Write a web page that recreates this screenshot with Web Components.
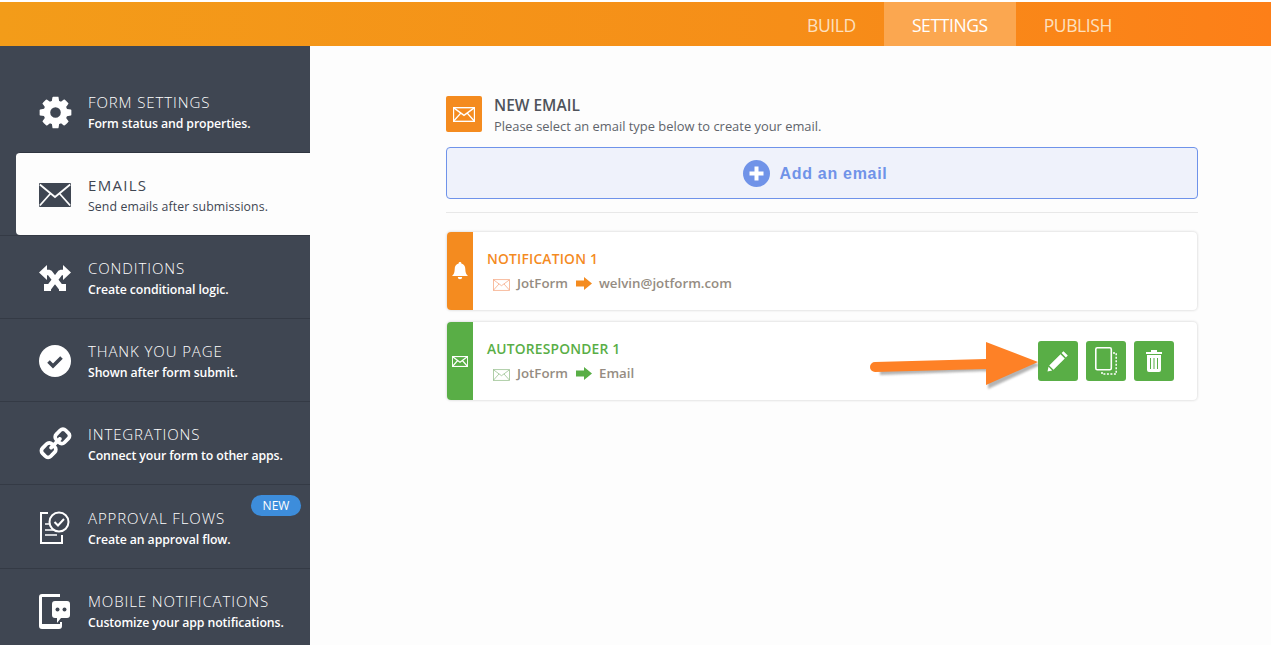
<!DOCTYPE html>
<html>
<head>
<meta charset="utf-8">
<title>Emails</title>
<style>
  html, body { margin: 0; height: 100%; overflow: hidden; background: #fdfdfd; }
  body { font-family: "Open Sans", "Noto Sans", sans-serif; }
</style>
</head>
<body>
<form-builder>
  <top-bar slot="top">
    <top-tab>BUILD</top-tab>
    <top-tab active>SETTINGS</top-tab>
    <top-tab>PUBLISH</top-tab>
  </top-bar>

  <side-nav slot="side">
    <nav-item heading="FORM SETTINGS" text="Form status and properties." plain>
      <svg viewBox="0 0 1792 1792" width="37" height="37" fill="currentColor"><path d="M1152 896q0-106-75-181t-181-75-181 75-75 181 75 181 181 75 181-75 75-181zm512-109v222q0 12-8 23t-20 13l-185 28q-19 54-39 91 35 50 107 138 10 12 10 25t-9 23q-27 37-99 108t-94 71q-12 0-26-9l-138-108q-44 23-91 38-16 136-29 186-7 28-36 28h-222q-14 0-24.500-8.500t-11.500-21.500l-28-184q-49-16-90-37l-141 107q-10 9-25 9-14 0-25-11-126-114-165-168-7-10-7-23 0-12 8-23 15-21 51-66.500t54-70.500q-27-50-41-99l-183-27q-13-2-21-12.500t-8-23.500v-222q0-12 8-23t19-13l186-28q14-46 39-92-40-57-107-138-10-12-10-24 0-10 9-23 26-36 98.500-107.500t94.500-71.500q13 0 26 10l138 107q44-23 91-38 16-136 29-186 7-28 36-28h222q14 0 24.500 8.500t11.500 21.500l28 184q49 16 90 37l142-107q9-9 24-9 13 0 25 10 129 119 165 170 7 8 7 22 0 12-8 23-15 21-51 66.500t-54 70.500q26 50 41 98l183 28q13 2 21 12.500t8 23.500z"/></svg>
    </nav-item>
    <nav-item heading="EMAILS" text="Send emails after submissions." active>
      <svg viewBox="0 0 32 24" width="32" height="24"><rect x="0" y="0" width="32" height="24" rx="1" fill="currentColor"/><path d="M0.800 1.500 16 14 31.200 1.500M0.800 22.500 11.500 10.500M31.200 22.500 20.500 10.500" fill="none" stroke="#fdfdfd" stroke-width="1.800"/></svg>
    </nav-item>
    <nav-item heading="CONDITIONS" text="Create conditional logic.">
      <svg viewBox="0 0 32 26" width="32" height="26" fill="currentColor"><path d="M0 7.500 8 0V15ZM32 7.500 24 0V15Z"/><path d="M7 7.500H10.500L23.500 24.500M25 7.500H21.500L8.500 24.500" fill="none" stroke="currentColor" stroke-width="5.500" stroke-linejoin="bevel"/><path d="M5 19H12V26H5ZM20 19H27V26H20Z"/></svg>
    </nav-item>
    <nav-item heading="THANK YOU PAGE" text="Shown after form submit.">
      <svg viewBox="0 0 32 32" width="32" height="32"><circle cx="16" cy="16" r="16" fill="currentColor"/><path d="M9.500 16.500 14 21 22.500 12.500" fill="none" stroke="#3f4652" stroke-width="3.600"/></svg>
    </nav-item>
    <nav-item heading="INTEGRATIONS" text="Connect your form to other apps.">
      <svg viewBox="0 0 1792 1792" width="35" height="35" fill="currentColor"><path transform="matrix(-1 0 0 1 1792 0)" d="M1520 1216q0-40-28-68l-208-208q-28-28-68-28-42 0-72 32 3 3 19 18.500t21.500 21.500 15 19 13 25.500 3.500 27.500q0 40-28 68t-68 28q-15 0-27.500-3.500t-25.500-13-19-15-21.500-21.500-18.500-19q-33 31-33 73 0 40 28 68l206 207q27 27 68 27 40 0 68-26l147-146q28-28 28-67zm-703-705q0-40-28-68l-206-207q-28-28-68-28-39 0-68 27l-147 146q-28 28-28 67 0 40 28 68l208 208q27 27 68 27 42 0 72-31-3-3-19-18.500t-21.500-21.500-15-19-13-25.500-3.500-27.500q0-40 28-68t68-28q15 0 27.500 3.500t25.500 13 19 15 21.500 21.500 18.500 19q33-31 33-73zm895 705q0 120-85 203l-147 146q-83 83-203 83-121 0-204-85l-206-207q-83-83-83-203 0-123 88-209l-88-88q-86 88-208 88-120 0-204-84l-208-208q-84-84-84-204t85-203l147-146q83-83 203-83 121 0 204 85l206 207q83 83 83 203 0 123-88 209l88 88q86-88 208-88 120 0 204 84l208 208q84 84 84 204z"/></svg>
    </nav-item>
    <nav-item heading="APPROVAL FLOWS" text="Create an approval flow." badge="NEW">
      <svg viewBox="0 0 32 34" width="32" height="34" fill="none" stroke="currentColor" stroke-width="2"><path d="M9 2H2V32H23V24"/><path d="M6 13H11M6 19H15M6 24H18" stroke-width="1.600"/><circle cx="20" cy="11" r="9.500"/><path d="M15.500 11 19 14.500 25 8"/></svg>
    </nav-item>
    <nav-item heading="MOBILE NOTIFICATIONS" text="Customize your app notifications.">
      <svg viewBox="0 0 32 35" width="32" height="35" fill="currentColor"><path d="M3 0H21V3H3V30H21V28H23V32A3 3 0 0 1 20 35H3A3 3 0 0 1 0 32V3A3 3 0 0 1 3 0Z"/><path d="M16 7H28A3 3 0 0 1 31 10V21A3 3 0 0 1 28 24H22L18 29V24H16A3 3 0 0 1 13 21V10A3 3 0 0 1 16 7Z"/><circle cx="18.500" cy="15.500" r="2" fill="#3f4652"/><circle cx="25.500" cy="15.500" r="2" fill="#3f4652"/></svg>
    </nav-item>
  </side-nav>

  <email-panel slot="main">
    <email-card slot="cards" kind="notification" heading="NOTIFICATION 1" target="welvin@jotform.com"></email-card>
    <email-card slot="cards" kind="autoresponder" heading="AUTORESPONDER 1" target="Email" actions></email-card>
    <callout-arrow slot="overlay"></callout-arrow>
  </email-panel>
</form-builder>

<script>
const ENVELOPE = `<rect x="0.500" y="0.500" width="23" height="15" fill="none" stroke="currentColor"/><path d="M0.500 0.500 12 9 23.500 0.500M0.500 15.500 8.500 6.500M23.500 15.500 15.500 6.500" fill="none" stroke="currentColor"/>`;

class FormBuilder extends HTMLElement {
  constructor() {
    super();
    this.attachShadow({ mode: "open" }).innerHTML = `
      <style>
        :host { display: grid; grid-template: 44px 1fr / 310px 1fr; height: 643px; padding-top: 2px; background: #fff; }
        .top { grid-column: 1 / 3; }
        .body { background: #fdfdfd; min-width: 0; position: relative; }
      </style>
      <div class="top"><slot name="top"></slot></div>
      <slot name="side"></slot>
      <div class="body"><slot name="main"></slot></div>
    `;
  }
}

class TopBar extends HTMLElement {
  constructor() {
    super();
    this.attachShadow({ mode: "open" }).innerHTML = `
      <style>
        :host { display: flex; justify-content: flex-end; height: 44px; padding-right: 131px; background: linear-gradient(90deg, #f39c19 0%, #f68e18 62%, #fd7f18 100%); }
      </style>
      <slot></slot>
    `;
  }
}

class TopTab extends HTMLElement {
  constructor() {
    super();
    this.attachShadow({ mode: "open" }).innerHTML = `
      <style>
        :host { display: flex; align-items: center; padding: 1px 28px 0; font: 400 17.500px "Open Sans", sans-serif; letter-spacing: -0.400px; color: #fde0c0; }
        :host([active]) { background: #fba750; color: #fff; }
      </style>
      <slot></slot>
    `;
  }
}

class SideNav extends HTMLElement {
  constructor() {
    super();
    this.attachShadow({ mode: "open" }).innerHTML = `
      <style>
        :host { display: block; background: #3f4652; padding-top: 23px; overflow: hidden; }
      </style>
      <slot></slot>
    `;
  }
}

class NavItem extends HTMLElement {
  constructor() {
    super();
    this.attachShadow({ mode: "open" }).innerHTML = `
      <style>
        :host { display: flex; position: relative; align-items: center; height: 82px; padding-left: 39px; border-top: 1px solid #343a45; color: #fff; }
        :host([plain]) { border-top-color: transparent; }
        :host([badge]) { height: 83px; }
        :host([active]) { margin-left: 16px; padding-left: 23px; background: #fdfdfd; color: #3f4652; border-top: 1px solid #2f3540; border-radius: 4px 0 0 4px; }
        .icon { width: 32px; height: 36px; display: flex; align-items: center; justify-content: center; flex: none; margin-top: 2px; }
        ::slotted(svg) { flex: none; }
        .label { margin-left: 17px; margin-top: 4px; }
        .heading { font: 300 15px/19px "Open Sans", sans-serif; letter-spacing: 0.900px; white-space: nowrap; }
        :host([active]) .heading { font-weight: 400; letter-spacing: 1.300px; }
        .text { font: 600 12.300px/18px "Open Sans", sans-serif; white-space: nowrap; letter-spacing: -0.100px; margin-top: 3px; }
        :host([active]) .text { font-weight: 400; letter-spacing: 0.100px; }
        .badge { position: absolute; top: 10px; right: 9px; height: 21px; width: 50px; border-radius: 11px; background: #3d8ddb; color: #fff; font: 400 12px/21px "Open Sans", sans-serif; text-align: center; }
      </style>
      <div class="icon"><slot></slot></div>
      <div class="label">
        <div class="heading"></div>
        <div class="text"></div>
      </div>
    `;
  }
  connectedCallback() {
    const root = this.shadowRoot;
    root.querySelector(".heading").textContent = this.getAttribute("heading");
    root.querySelector(".text").textContent = this.getAttribute("text");
    if (this.hasAttribute("badge")) {
      const badge = document.createElement("div");
      badge.className = "badge";
      badge.textContent = this.getAttribute("badge");
      root.append(badge);
    }
  }
}

class EmailPanel extends HTMLElement {
  constructor() {
    super();
    this.attachShadow({ mode: "open" }).innerHTML = `
      <style>
        :host { display: block; width: 752px; margin-left: 136px; padding-top: 50px; color: #55585f; }
        .head { display: flex; height: 36px; }
        .badge { width: 36px; height: 36px; border-radius: 2px; background: #f48b1f; display: flex; align-items: center; justify-content: center; color: #fff; stroke-width: 1.600; }
        .copy { margin-left: 12px; }
        .title { font: 600 15.500px/19px "Open Sans", sans-serif; margin-top: 0; color: #4f535b; }
        .sub { font: 400 12.900px/18px "Open Sans", sans-serif; color: #60646b; margin-top: 2px; }
        .add { display: flex; align-items: center; justify-content: center; height: 49px; margin-top: 15px; padding: 1px 14px 0 0; border: 1px solid #6f93ea; border-radius: 4px; background: #eff2fb; color: #7093e8; font: 700 16px "Liberation Sans", sans-serif; letter-spacing: 0.700px; }
        .add svg { margin-right: 10px; margin-top: -1px; }
        .rule { height: 1px; background: #e8e8e8; margin-top: 13px; margin-bottom: 19px; }
        .cards { display: flex; flex-direction: column; gap: 12px; padding: 0 1px; }
      </style>
      <div class="head">
        <div class="badge"><svg viewBox="0 0 24 16" width="22" height="15">${ENVELOPE}</svg></div>
        <div class="copy">
          <div class="title">NEW EMAIL</div>
          <div class="sub">Please select an email type below to create your email.</div>
        </div>
      </div>
      <div class="add">
        <svg viewBox="0 0 27 27" width="27" height="27"><circle cx="13.500" cy="13.500" r="13.500" fill="currentColor"/><path d="M13.500 6.500V20.500M6.500 13.500H20.500" stroke="#fff" stroke-width="4"/></svg>
        Add an email
      </div>
      <div class="rule"></div>
      <div class="cards"><slot name="cards"></slot></div>
      <slot name="overlay"></slot>
    `;
  }
}

class EmailCard extends HTMLElement {
  constructor() {
    super();
    this.attachShadow({ mode: "open" }).innerHTML = `
      <style>
        :host { display: flex; height: 78px; background: #fff; border-radius: 4px; box-shadow: 0 0 3px rgba(0, 0, 0, 0.2); overflow: hidden; --accent: #f48b1f; --mail: #f5a27a; }
        :host([kind="autoresponder"]) { --accent: #59ae46; --mail: #8fbb85; }
        .strip { width: 26px; flex: none; background: var(--accent); color: #fff; display: flex; align-items: center; justify-content: center; stroke-width: 1.800; }
        .info { margin-left: 14px; padding-top: 17px; flex: 1; }
        .name { font: 600 13.800px/20px "Open Sans", sans-serif; color: var(--accent); letter-spacing: 0.200px; }
        .route { display: flex; align-items: center; margin-top: 4px; height: 20px; padding-left: 6px; font: 600 13.300px/20px "Open Sans", sans-serif; color: #958c82; }
        .mail { color: var(--mail); margin-right: 7px; margin-top: 3px; }
        .arrow { margin: 0 7px 0 8px; }
        .actions { display: flex; gap: 8px; align-items: center; padding-right: 23px; }
        .act { width: 40px; height: 40px; border-radius: 3px; background: #59ae46; display: flex; align-items: center; justify-content: center; color: #fff; }
      </style>
      <div class="strip"></div>
      <div class="info">
        <div class="name"></div>
        <div class="route">
          <svg class="mail" viewBox="0 0 24 16" width="17" height="12">${ENVELOPE}</svg>
          <span>JotForm</span>
          <svg class="arrow" viewBox="0 0 16 13" width="16" height="13"><path d="M0 3.500H8V0L16 6.500 8 13V9.500H0Z" fill="var(--accent)"/></svg>
          <span class="target"></span>
        </div>
      </div>
    `;
  }
  connectedCallback() {
    const root = this.shadowRoot;
    root.querySelector(".name").textContent = this.getAttribute("heading");
    root.querySelector(".target").textContent = this.getAttribute("target");
    root.querySelector(".strip").innerHTML = this.getAttribute("kind") === "notification"
      ? `<svg viewBox="0 0 16 18" width="16" height="18" fill="currentColor"><path d="M8 0A1.300 1.300 0 0 1 9.300 1.500C12 2 13.300 4.200 13.300 7 13.300 10.500 14.200 12.300 16 14H0C1.800 12.300 2.700 10.500 2.700 7 2.700 4.200 4 2 6.700 1.500A1.300 1.300 0 0 1 8 0ZM5.800 15H10.200A2.200 2.200 0 0 1 5.800 15Z"/></svg>`
      : `<svg viewBox="0 0 24 16" width="16" height="11">${ENVELOPE}</svg>`;
    if (this.hasAttribute("actions")) {
      const actions = document.createElement("div");
      actions.className = "actions";
      actions.innerHTML = `
        <div class="act"><svg viewBox="0 0 22 22" width="22" height="22" fill="currentColor"><path d="M16.500 1.200 20.800 5.500 18.900 7.400 14.600 3.100ZM13.500 4.200 17.800 8.500 6.500 19.800 2.200 15.500ZM1.500 16.800 5.200 20.500 0.500 21.500Z"/></svg></div>
        <div class="act"><svg viewBox="0 0 22 28" width="22" height="28" fill="none" stroke="currentColor"><rect x="0.800" y="0.800" width="15.500" height="22" rx="1.500" stroke-width="1.600"/><path d="M18 6H21.200V27H7V24.500" stroke-dasharray="2 1.500" stroke-width="1.500"/></svg></div>
        <div class="act"><svg viewBox="0 0 16 22" width="16" height="22" fill="currentColor"><path d="M5 0H11V2H16V4H0V2H5ZM1 5H15V20A2 2 0 0 1 13 22H3A2 2 0 0 1 1 20ZM4 8V19H5V8ZM7.500 8V19H8.500V8ZM11 8V19H12V8Z" fill-rule="evenodd"/></svg></div>
      `;
      root.append(actions);
    }
  }
}

class CalloutArrow extends HTMLElement {
  constructor() {
    super();
    this.attachShadow({ mode: "open" }).innerHTML = `
      <style>
        :host { position: absolute; left: 560px; top: 295px; width: 175px; height: 54px; display: block; pointer-events: none; }
      </style>
      <svg viewBox="0 0 175 54" width="175" height="54">
        <defs><filter id="soft"><feGaussianBlur stdDeviation="0.900"/></filter></defs>
        <path d="M10 28 118 25 118 48 170 24 160 20 118 30 10 34Z" fill="#777" opacity="0.550" filter="url(#soft)"/>
        <path d="M5 21 116 18V1L168 21 116 44V28L5 31A5 5 0 0 1 5 21Z" fill="#fe8126"/>
      </svg>
    `;
  }
}

customElements.define("form-builder", FormBuilder);
customElements.define("top-bar", TopBar);
customElements.define("top-tab", TopTab);
customElements.define("side-nav", SideNav);
customElements.define("nav-item", NavItem);
customElements.define("email-panel", EmailPanel);
customElements.define("email-card", EmailCard);
customElements.define("callout-arrow", CalloutArrow);
</script>
</body>
</html>
